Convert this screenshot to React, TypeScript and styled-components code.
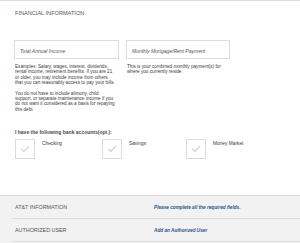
import { createGlobalStyle } from "styled-components";
import styled from "styled-components";

const GlobalStyle = createGlobalStyle`
  html, body {
    margin: 0;
    padding: 0;
    background: #ffffff;
    font-family: "Liberation Sans", Arial, sans-serif;
  }
`;

const colors = {
  border: "#dcdcdc",
  heading: "#555555",
  text: "#3a3a3a",
  blue: "#1f5796",
  band: "#f2f2f2",
};

type Account = { label: string };

const accounts: Account[] = [
  { label: "Checking" },
  { label: "Savings" },
  { label: "Money Market" },
];

const CheckMark = () => (
  <svg width="10" height="8" viewBox="0 0 10 8">
    <path
      d="M1.5 4.2 L4 6.5 L8.5 1.5"
      fill="none"
      stroke="#d8d8d8"
      strokeWidth="1.4"
      strokeLinecap="round"
      strokeLinejoin="round"
    />
  </svg>
);

export default function App() {
  return (
    <Page>
      <GlobalStyle />
      <Financial>
        <Title>FINANCIAL INFORMATION</Title>

        <FieldRow>
          <Field>
            <Input placeholder="Total Annual Income" />
            <Help>
              Examples: Salary, wages, interest, dividends, rental income,
              retirement benefits. If you are 21 or older, you may include
              income from others that you can reasonably access to pay your
              bills.
            </Help>
            <Help>
              You do not have to include alimony, child support, or separate
              maintenance income if you do not want it considered as a basis
              for repaying this debt.
            </Help>
          </Field>
          <Field>
            <Input placeholder="Monthly Mortgage/Rent Payment" />
            <Help>
              This is your combined monthly payment(s) for where you currently
              reside.
            </Help>
          </Field>
        </FieldRow>

        <AccountsLabel>I have the following bank accounts(opt.):</AccountsLabel>
        <Accounts>
          {accounts.map((a) => (
            <Account key={a.label}>
              <Box>
                <CheckMark />
              </Box>
              <AccountName>{a.label}</AccountName>
            </Account>
          ))}
        </Accounts>
      </Financial>

      <Summary>
        <SummaryRow>
          <SummaryTitle>AT&amp;T INFORMATION</SummaryTitle>
          <SummaryLink>Please complete all the required fields.</SummaryLink>
        </SummaryRow>
        <SummaryRow>
          <SummaryTitle>AUTHORIZED USER</SummaryTitle>
          <SummaryLink>Add an Authorized User</SummaryLink>
        </SummaryRow>
      </Summary>
    </Page>
  );
}

const Page = styled.div`
  width: 300px;
  height: 243px;
  overflow: hidden;
  display: flex;
  flex-direction: column;
`;

const Financial = styled.section`
  height: 195px;
  border-top: 1px solid ${colors.border};
  padding: 0 15px;
  box-sizing: border-box;
`;

const Title = styled.h2`
  margin: 0;
  padding-top: 9px;
  height: 6px;
  line-height: 6px;
  font-size: 5.6px;
  font-weight: normal;
  color: ${colors.heading};
`;

const FieldRow = styled.div`
  display: grid;
  grid-template-columns: 105px 104px;
  gap: 7px;
  margin-top: 24px;
  margin-left: -1px;
`;

const Field = styled.div`
  display: flex;
  flex-direction: column;
`;

const Input = styled.input`
  box-sizing: border-box;
  height: 19px;
  width: 100%;
  border: 1px solid ${colors.border};
  padding: 3px 0 0 5px;
  margin: 0 0 5px;
  font-family: "Liberation Sans", Arial, sans-serif;
  font-size: 5px;
  font-style: italic;
  outline: none;

  &::placeholder {
    color: #555555;
  }
`;

const Help = styled.p`
  margin: 0 0 5px;
  padding-left: 1px;
  padding-right: 4px;
  font-size: 4.65px;
  line-height: 5.4px;
  color: ${colors.text};
`;

const AccountsLabel = styled.div`
  margin-top: 12px;
  font-size: 5px;
  line-height: 6px;
  font-weight: bold;
  color: #4a4a4a;
`;

const Accounts = styled.div`
  display: grid;
  grid-template-columns: 87px 84px 1fr;
  margin-top: 4px;
`;

const Account = styled.label`
  display: flex;
  gap: 7px;
`;

const Box = styled.span`
  box-sizing: border-box;
  flex: none;
  width: 20px;
  height: 20px;
  border: 1px solid ${colors.border};
  background: #ffffff;
  display: flex;
  align-items: center;
  justify-content: center;
`;

const AccountName = styled.span`
  padding-top: 2px;
  font-size: 4.8px;
  line-height: 6px;
  white-space: nowrap;
  color: ${colors.text};
`;

const Summary = styled.section`
  flex: 1;
  background: ${colors.band};
  border-top: 1px solid ${colors.border};
  padding-left: 12px;
`;

const SummaryRow = styled.div`
  display: grid;
  grid-template-columns: 139px auto;
  align-items: center;
  height: 22px;
  border-bottom: 1px solid ${colors.border};
  padding-left: 3px;
`;

const SummaryTitle = styled.span`
  font-size: 5.4px;
  color: ${colors.heading};
`;

const SummaryLink = styled.span`
  font-size: 4.7px;
  font-weight: bold;
  font-style: italic;
  color: ${colors.blue};
`;
